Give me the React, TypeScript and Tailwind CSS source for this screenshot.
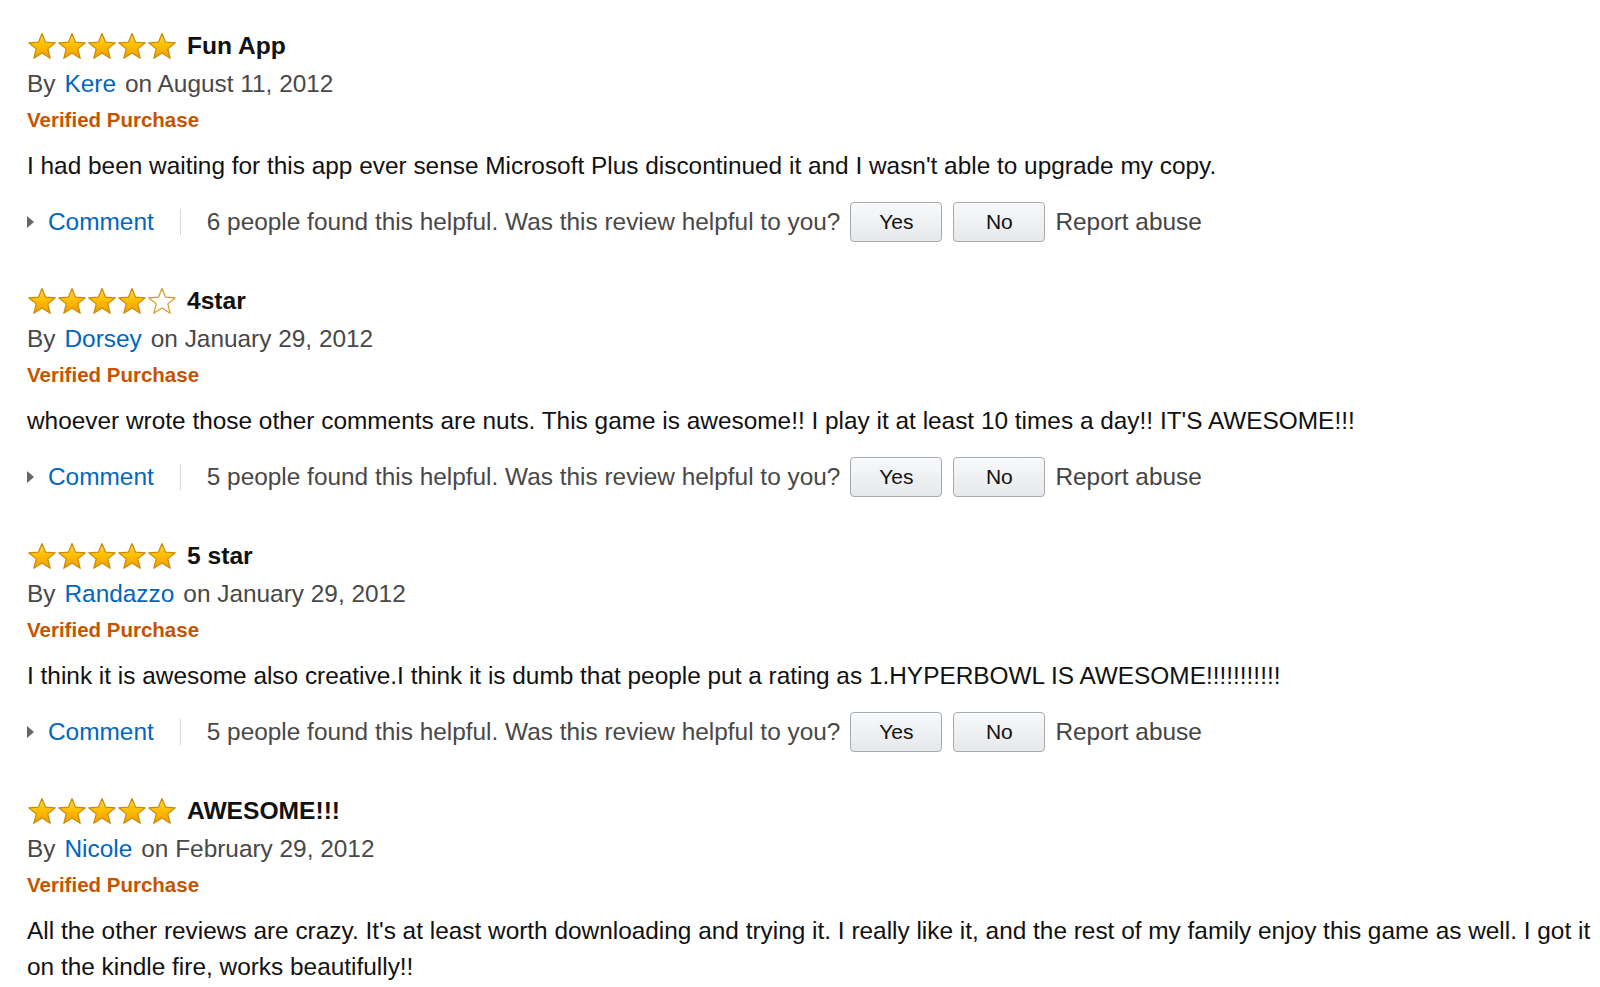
import { useId } from "react";

type Review = {
  rating: number;
  title: string;
  author: string;
  date: string;
  body: string;
  helpful?: number;
};

const reviews: Review[] = [
  {
    rating: 5,
    title: "Fun App",
    author: "Kere",
    date: "August 11, 2012",
    body: "I had been waiting for this app ever sense Microsoft Plus discontinued it and I wasn't able to upgrade my copy.",
    helpful: 6,
  },
  {
    rating: 4,
    title: "4star",
    author: "Dorsey",
    date: "January 29, 2012",
    body: "whoever wrote those other comments are nuts. This game is awesome!! I play it at least 10 times a day!! IT'S AWESOME!!!",
    helpful: 5,
  },
  {
    rating: 5,
    title: "5 star",
    author: "Randazzo",
    date: "January 29, 2012",
    body: "I think it is awesome also creative.I think it is dumb that people put a rating as 1.HYPERBOWL IS AWESOME!!!!!!!!!!!",
    helpful: 5,
  },
  {
    rating: 5,
    title: "AWESOME!!!",
    author: "Nicole",
    date: "February 29, 2012",
    body: "All the other reviews are crazy. It's at least worth downloading and trying it. I really like it, and the rest of my family enjoy this game as well. I got it on the kindle fire, works beautifully!!",
  },
];

const STAR_POINTS =
  "15,1.5 18.6,10.2 28.3,10.8 20.8,16.9 23.2,26.3 15,21 6.8,26.3 9.2,16.9 1.7,10.8 11.4,10.2";

function Star({ filled }: { filled: boolean }) {
  const id = useId();
  return (
    <svg width="30" height="28" viewBox="0 0 30 28" className="block shrink-0">
      <defs>
        <linearGradient id={id} x1="0" y1="0" x2="0" y2="1">
          <stop offset="0%" stopColor="#ffd84a" />
          <stop offset="45%" stopColor="#ffc000" />
          <stop offset="100%" stopColor="#f39c00" />
        </linearGradient>
      </defs>
      <polygon
        points={STAR_POINTS}
        fill={filled ? `url(#${id})` : "#ffffff"}
        stroke={filled ? "#c98a06" : "#d19a24"}
        strokeWidth={1.2}
        strokeLinejoin="round"
      />
    </svg>
  );
}

function VoteButton({ label }: { label: string }) {
  return (
    <button className="w-[92px] h-[40px] rounded-[4px] border border-[#a6a9ae] bg-gradient-to-b from-[#f8f9fa] to-[#e6e8eb] text-[21px] text-[#111] shadow-[inset_0_1px_0_rgba(255,255,255,0.7)]">
      {label}
    </button>
  );
}

function ReviewItem({ review }: { review: Review }) {
  return (
    <div>
      {/* Stars + title */}
      <div className="flex items-center h-[36px]">
        {[0, 1, 2, 3, 4].map((i) => (
          <Star key={i} filled={i < review.rating} />
        ))}
        <span className="ml-[10px] text-[24.6px] font-bold text-[#111] leading-[36px]">
          {review.title}
        </span>
      </div>

      <div className="mt-[2px] text-[24.4px] leading-[36px] text-[#484848]">
        By<a className="inline-block mx-[9px] text-[#0066c0]">{review.author}</a>on {review.date}
      </div>

      <div className="mt-[3px] text-[20.5px] leading-[30px] font-bold text-[#c45500]">
        Verified Purchase
      </div>

      <p className="mt-[13px] text-[24.4px] leading-[36px] text-[#111]">{review.body}</p>

      {review.helpful !== undefined && (
        <div className="mt-[18px] flex items-center h-[40px] text-[24.4px] text-[#484848]">
          <span className="w-0 h-0 border-y-[6px] border-y-transparent border-l-[7px] border-l-[#666]" />
          <a className="ml-[14px] text-[#0066c0]">Comment</a>
          <span className="mx-[26px] w-px h-[26px] bg-[#d8d8d8]" />
          <span>
            {review.helpful} people found this helpful. Was this review helpful to you?
          </span>
          <div className="ml-[10px] flex items-center gap-[11px]">
            <VoteButton label="Yes" />
            <VoteButton label="No" />
          </div>
          <span className="ml-[10px] text-[#444]">Report abuse</span>
        </div>
      )}
    </div>
  );
}

export default function App() {
  return (
    <div
      className="min-h-screen bg-white pl-[27px] pt-[28px] flex flex-col gap-[41px] overflow-hidden"
      style={{ fontFamily: '"Liberation Sans", Arial, sans-serif' }}
    >
      {reviews.map((r, i) => (
        <ReviewItem key={i} review={r} />
      ))}
    </div>
  );
}
